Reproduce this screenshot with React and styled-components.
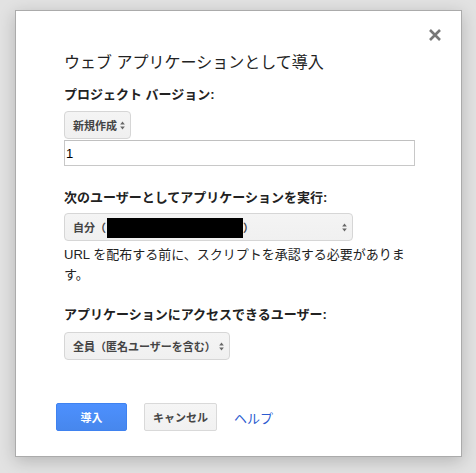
import React from "react";
import styled, { createGlobalStyle } from "styled-components";

const GlobalStyle = createGlobalStyle`
  html, body {
    margin: 0;
    padding: 0;
    background: #e2e2e2;
  }
  body {
    font-family: "Liberation Sans", "Noto Sans CJK JP", sans-serif;
    color: #222;
  }
`;

const Page = styled.div`
  width: 476px;
  height: 473px;
  padding: 10px 0 0 15px;
  box-sizing: border-box;
`;

const Dialog = styled.div`
  position: relative;
  width: 447px;
  height: 447px;
  box-sizing: border-box;
  background: #fff;
  border: 1px solid rgba(0, 0, 0, 0.33);
  box-shadow: 0 4px 16px rgba(0, 0, 0, 0.2);
  padding: 42px 0 0 48px;
  display: flex;
  flex-direction: column;
  align-items: flex-start;
`;

const Close = styled.button`
  position: absolute;
  top: 17px;
  right: 19px;
  width: 14px;
  height: 14px;
  padding: 0;
  border: 0;
  background: none;
  cursor: pointer;
  display: flex;
`;

const Title = styled.h2`
  margin: 0;
  font-size: 16px;
  line-height: 20px;
  font-weight: normal;
  color: #222;
`;

const Label = styled.div`
  margin-top: ${({ $top }) => $top}px;
  font-size: 13px;
  line-height: 16px;
  font-weight: bold;
  color: #222;
`;

const Select = styled.div`
  margin-top: ${({ $top }) => $top}px;
  width: ${({ $width }) => $width}px;
  height: 28px;
  box-sizing: border-box;
  display: flex;
  align-items: center;
  justify-content: space-between;
  padding: 0 5px 0 8px;
  border: 1px solid #d6d6d6;
  border-radius: 4px;
  background: linear-gradient(#f4f4f4, #f0f0f0);
  font-size: 11px;
  font-weight: bold;
  color: #444;
  white-space: nowrap;
`;

const SelectText = styled.span`
  display: flex;
  align-items: center;
`;

// masked e-mail address, as in the screenshot
const Redacted = styled.span`
  display: inline-block;
  width: 136px;
  height: 20px;
  background: #000;
  margin: 1px 0 0 1px;
`;

const TextInput = styled.input`
  margin-top: 1px;
  width: 351px;
  height: 26px;
  box-sizing: border-box;
  border: 1px solid #c8c8c8;
  border-top-color: #c0c0c0;
  padding: 0 1px;
  font-family: "Liberation Sans", sans-serif;
  font-size: 13px;
  color: #000;
  outline: none;
`;

const Note = styled.p`
  margin: 4px 0 0;
  width: 351px;
  font-size: 13px;
  line-height: 20px;
  color: #222;
`;

const Footer = styled.div`
  margin: 43px 0 0 -8px;
  display: flex;
  align-items: center;
  gap: 17px;
`;

const Button = styled.button`
  height: 28px;
  min-width: ${({ $width }) => $width}px;
  box-sizing: border-box;
  padding: 0 8px;
  border-radius: 2px;
  font-family: "Liberation Sans", "Noto Sans CJK JP", sans-serif;
  font-size: 11px;
  font-weight: bold;
  cursor: pointer;
  color: ${({ $primary }) => ($primary ? "#fff" : "#444")};
  background: ${({ $primary }) =>
    $primary ? "linear-gradient(#4d90fe, #4787ed)" : "linear-gradient(#f5f5f5, #f1f1f1)"};
  border: 1px solid ${({ $primary }) => ($primary ? "#3f82f0" : "#d9d9d9")};
`;

const HelpLink = styled.a`
  font-size: 13px;
  color: #2b5bd0;
  text-decoration: none;
  cursor: pointer;
`;

const Arrows = () => (
  <svg width="5" height="9" viewBox="0 0 5 9">
    <path d="M2.5 0.5 L4.8 3.6 L0.2 3.6 Z" fill="#666" />
    <path d="M2.5 8.5 L4.8 5.4 L0.2 5.4 Z" fill="#666" />
  </svg>
);

const App = () => (
  <>
    <GlobalStyle />
    <Page>
      <Dialog>
        <Close aria-label="閉じる">
          <svg width="14" height="14" viewBox="0 0 14 14">
            <path d="M2 2 L12 12 M12 2 L2 12" stroke="#777" strokeWidth="2.6" />
          </svg>
        </Close>
        <Title>ウェブ アプリケーションとして導入</Title>

        <Label $top={14}>プロジェクト バージョン:</Label>
        <Select $top={8} $width={67}>
          <SelectText>新規作成</SelectText>
          <Arrows />
        </Select>
        <TextInput defaultValue="1" />

        <Label $top={24}>次のユーザーとしてアプリケーションを実行:</Label>
        <Select $top={7} $width={289}>
          <SelectText>
            自分（<Redacted />）
          </SelectText>
          <Arrows />
        </Select>
        <Note>URL を配布する前に、スクリプトを承認する必要があります。</Note>

        <Label $top={22}>アプリケーションにアクセスできるユーザー:</Label>
        <Select $top={9} $width={166}>
          <SelectText>全員（匿名ユーザーを含む）</SelectText>
          <Arrows />
        </Select>

        <Footer>
          <Button $primary $width={71}>導入</Button>
          <Button $width={72}>キャンセル</Button>
          <HelpLink>ヘルプ</HelpLink>
        </Footer>
      </Dialog>
    </Page>
  </>
);

export default App;
